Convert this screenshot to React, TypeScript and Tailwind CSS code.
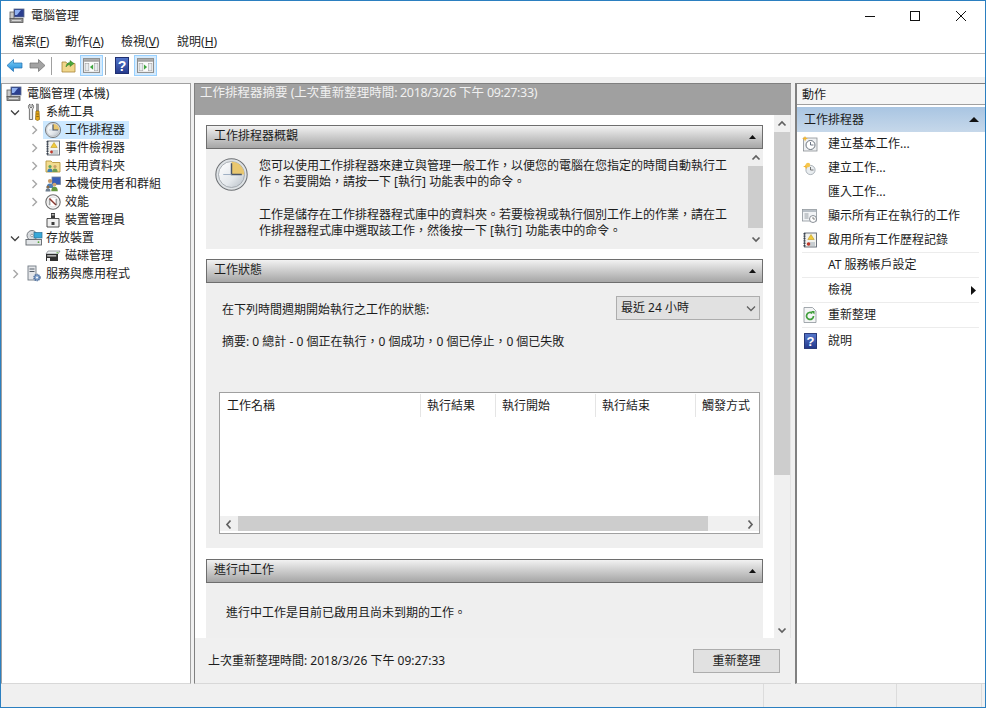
import React from "react";

const C = "\uFF0C";

const Clock = ({ s = 16 }: { s?: number }) => (
  <svg width={s} height={s} viewBox="0 0 32 32" className="shrink-0">
    <defs>
      <linearGradient id="cg" x1="0" y1="0" x2="1" y2="1">
        <stop offset="0" stopColor="#ffffff" />
        <stop offset="0.6" stopColor="#e4e8ec" />
        <stop offset="1" stopColor="#b4bcc4" />
      </linearGradient>
    </defs>
    <circle cx="16" cy="16" r="15.2" fill="#dfe3e6" stroke="#6d7074" strokeWidth={s < 20 ? 1.8 : 1} />
    <circle cx="16" cy="16" r="12.6" fill="url(#cg)" stroke="#9aa0a6" strokeWidth="0.8" />
    <path d="M16 16V3.6A12.4 12.4 0 0 1 28.4 16Z" fill="#e9c76f" />
    <path d="M16 5V16H26" fill="none" stroke="#4a5568" strokeWidth={s < 20 ? 2.4 : 1.4} />
    <path d="M16 16H8" stroke="#9fb0c4" strokeWidth="1" />
  </svg>
);

const Computer = () => (
  <svg width="16" height="16" viewBox="0 0 16 16" className="shrink-0">
    <rect x="5" y="1" width="10" height="8" fill="#2b3f8f" stroke="#5a6a8a" strokeWidth="0.8" />
    <path d="M6 2h6l-4 5H6Z" fill="#8fb0f0" />
    <rect x="1" y="4" width="4" height="7" fill="#c9c9c9" stroke="#5f5f5f" strokeWidth="0.8" />
    <rect x="1" y="10.5" width="13" height="4" fill="#9a9a9a" stroke="#555" strokeWidth="0.8" />
    <path d="M3 12.5h9" stroke="#e8e8e8" strokeWidth="0.8" />
  </svg>
);

const Tools = () => (
  <svg width="16" height="18" viewBox="0 0 16 18" className="shrink-0">
    <path d="M4 1v3l1 1 1-1V1c2 1 2 4 .6 5v10.5H3.4V6C2 5 2 2 4 1Z" fill="#e8e8e8" stroke="#555" strokeWidth="0.8" />
    <rect x="10.5" y="1" width="2" height="7" fill="#9a9a9a" stroke="#666" strokeWidth="0.5" />
    <path d="M10 8h3l.5 8.5-2 1-2-1Z" fill="#e6a817" stroke="#8a6510" strokeWidth="0.7" />
    <path d="M10.4 11h2.4M10.4 13.5h2.4" stroke="#6d4e0a" strokeWidth="0.7" />
  </svg>
);

const LogBook = ({ warn = false }: { warn?: boolean }) => (
  <svg width="16" height="16" viewBox="0 0 16 16" className="shrink-0">
    <rect x="2.5" y="1" width="12" height="14" fill="#f2f2ee" stroke="#5c6470" strokeWidth="0.9" />
    <path d="M2.5 1v14" stroke="#39424f" strokeWidth="2" strokeDasharray="1.4 1" />
    <path d="M6 11h7M6 13h7" stroke="#93a0ad" strokeWidth="0.9" />
    <path d="M9 2.5l3.2 5H5.8Z" fill="#f2cc3c" stroke="#b38d10" strokeWidth="0.5" />
    <circle cx="6.5" cy="12" r={warn ? 1.4 : 1.8} fill="#c0392b" />
  </svg>
);

const SharedFolder = () => (
  <svg width="16" height="16" viewBox="0 0 16 16" className="shrink-0">
    <path d="M1 3h5l1.5 1.5H15V14H1Z" fill="#f3dc90" stroke="#b8963c" strokeWidth="0.9" />
    <circle cx="5" cy="8.5" r="1.6" fill="#5ea35e" />
    <path d="M2.4 14c0-2.6 1-3.6 2.6-3.6s2.6 1 2.6 3.6Z" fill="#3d7fb5" />
    <circle cx="10" cy="8.5" r="1.6" fill="#c9a06a" />
    <path d="M7.4 14c0-2.6 1-3.6 2.6-3.6s2.6 1 2.6 3.6Z" fill="#6d9b52" />
  </svg>
);

const Users = () => (
  <svg width="16" height="16" viewBox="0 0 16 16" className="shrink-0">
    <rect x="7" y="1" width="8.5" height="7.5" fill="#3a60b8" stroke="#72819a" strokeWidth="0.8" />
    <circle cx="5" cy="5" r="2.1" fill="#c99a66" />
    <path d="M1.5 12c0-3.4 1.5-4.6 3.5-4.6S8.500 8.600 8.500 12Z" fill="#4d7fb8" />
    <circle cx="9.500" cy="8.600" r="1.900" fill="#d2a673" />
    <path d="M6.200 15.200c0-3 1.400-4.400 3.300-4.400s3.300 1.400 3.300 4.400Z" fill="#64983f" />
    <circle cx="3" cy="11" r="1.500" fill="#8c6a44" />
    <path d="M.5 15.500c0-2.400 1-3.300 2.500-3.300s2.500.9 2.500 3.300Z" fill="#6f7f90" />
  </svg>
);

const Perf = () => (
  <svg width="16" height="16" viewBox="0 0 16 16" className="shrink-0">
    <circle cx="8" cy="8" r="7.200" fill="#f7f7f7" stroke="#6f6f6f" strokeWidth="1.100" />
    <circle cx="8" cy="8" r="5" fill="#fff" stroke="#c8c8c8" strokeWidth="0.600" />
    <path d="M4.500 4.500L11 11" stroke="#c0392b" strokeWidth="1.500" />
    <path d="M4.800 11V5.200L11.200 11V5" fill="none" stroke="#444" strokeWidth="0.700" />
  </svg>
);

const DeviceMgr = () => (
  <svg width="16" height="16" viewBox="0 0 16 16" className="shrink-0">
    <rect x="6" y="1" width="4" height="5" fill="#3b3b3b" />
    <rect x="6.800" y="2" width="1" height="1.500" fill="#ddd" />
    <rect x="8.300" y="2" width="1" height="1.500" fill="#ddd" />
    <path d="M2 6.500h12V15H2Z" fill="#f0f0f0" stroke="#3c3c3c" strokeWidth="0.900" />
    <rect x="6.500" y="10" width="3" height="3" fill="#3c3c3c" />
  </svg>
);

const Storage = () => (
  <svg width="18" height="16" viewBox="0 0 18 16" className="shrink-0">
    <circle cx="7" cy="5.500" r="5" fill="#d9dcdf" stroke="#6c7278" strokeWidth="0.900" />
    <circle cx="7" cy="5.500" r="1.300" fill="#fff" stroke="#6c7278" strokeWidth="0.600" />
    <rect x="9" y="2.500" width="8" height="5.500" fill="#38a8d8" stroke="#2b6f96" strokeWidth="0.700" />
    <rect x="1" y="9.500" width="15.500" height="5.500" fill="#e2e5e8" stroke="#5f656b" strokeWidth="0.900" />
    <circle cx="13.500" cy="12.200" r="0.900" fill="#56a83e" />
  </svg>
);

const Disk = () => (
  <svg width="16" height="16" viewBox="0 0 16 16" className="shrink-0">
    <path d="M3 3h12l-2 3H1Z" fill="#eceff1" stroke="#7c8186" strokeWidth="0.700" />
    <rect x="1" y="6" width="12" height="7" fill="#2f2f2f" />
    <rect x="2.200" y="7.200" width="9" height="1.300" fill="#cfcfcf" />
    <rect x="11.500" y="4.200" width="1.800" height="1" fill="#6cbf4a" />
    <rect x="2" y="10" width="3" height="3" fill="#f4f4f4" />
  </svg>
);

const Services = () => (
  <svg width="16" height="18" viewBox="0 0 16 18" className="shrink-0">
    <rect x="2" y="1" width="8" height="14" fill="#e4e6e9" stroke="#717a84" strokeWidth="0.900" />
    <path d="M3.500 4h5M3.500 6.500h5" stroke="#555e68" strokeWidth="1" />
    <circle cx="11" cy="12.500" r="3" fill="#7f9fc9" stroke="#4c6d9c" strokeWidth="1.500" strokeDasharray="1.200 0.700" />
    <circle cx="11" cy="12.500" r="1" fill="#fff" />
  </svg>
);

const Help = ({ s = 14 }: { s?: number }) => (
  <svg width={s} height={s + 3} viewBox="0 0 14 17" className="shrink-0">
    <defs>
      <linearGradient id="hg" x1="0" y1="0" x2="0" y2="1">
        <stop offset="0" stopColor="#5578cc" />
        <stop offset="1" stopColor="#24398c" />
      </linearGradient>
    </defs>
    <rect x="0.500" y="0.500" width="13" height="16" fill="url(#hg)" stroke="#1f2f70" />
    <text x="7" y="13.500" textAnchor="middle" fontSize="14" fontWeight="700" fill="#fff" fontFamily="Liberation Sans">?</text>
  </svg>
);

const PaneToggle = ({ left }: { left: boolean }) => (
  <svg width="17" height="15" viewBox="0 0 16 14">
    <rect x="0.500" y="0.500" width="15" height="13" fill="#fbfbfb" stroke="#8d8d8d" />
    <rect x="1" y="1" width="14" height="2.500" fill="#a3a3a3" />
    <rect x="2" y="5" width="3.500" height="7" fill="#e8ecef" stroke="#9a9a9a" strokeWidth="0.500" />
    <rect x="11" y="5" width="3" height="7" fill="#e8ecef" stroke="#9a9a9a" strokeWidth="0.500" />
    {left ? <path d="M9.500 6v5L6.500 8.500Z" fill="#3fa63f" /> : <path d="M6.500 6v5l3-2.500Z" fill="#3fa63f" />}
  </svg>
);

const NavArrow = ({ left }: { left: boolean }) => (
  <svg width="17" height="15" viewBox="0 0 17 14">
    <defs>
      <linearGradient id="ba" x1="0" y1="0" x2="0" y2="1">
        <stop offset="0" stopColor="#7fd0f6" />
        <stop offset="1" stopColor="#1e88d8" />
      </linearGradient>
    </defs>
    {left ? (
      <path d="M1 7l6.500-6v3.500H16v5H7.500V13Z" fill="url(#ba)" stroke="#1f6fb0" strokeWidth="0.700" />
    ) : (
      <path d="M16 7L9.500 1v3.500H1v5h8.500V13Z" fill="#a3a3a3" stroke="#6e6e6e" strokeWidth="0.700" />
    )}
  </svg>
);

const FolderUp = () => (
  <svg width="15" height="15" viewBox="0 0 15 15">
    <path d="M1 4h4l1 1.500h8V14H1Z" fill="#f0d68a" stroke="#a8873a" strokeWidth="0.800" />
    <path d="M5 9c0-3 2-4.500 4-4.500V2.500L13 5.500 9 8.500V6.500C7.500 6.500 6 7.500 5 9Z" fill="#4aa83a" stroke="#2f7a25" strokeWidth="0.500" />
  </svg>
);

const NewBasic = () => (
  <svg width="16" height="16" viewBox="0 0 16 16">
    <rect x="1.500" y="2" width="13.500" height="13" fill="#eef0f2" stroke="#8a8f94" strokeWidth="0.800" />
    <circle cx="8.500" cy="9" r="4.500" fill="#fff" stroke="#5d6670" strokeWidth="0.900" />
    <path d="M8.500 6v3h3" fill="none" stroke="#4a5568" strokeWidth="0.800" />
    <path d="M3 0l.9 1.800L6 2.500l-2 .8L3 5.500l-.8-2.200L0 2.500l2.100-.7Z" fill="#f2b632" />
  </svg>
);

const NewTask = () => (
  <svg width="16" height="16" viewBox="0 0 16 16">
    <circle cx="8.500" cy="10" r="4.600" fill="#e9edf0" stroke="#99a2aa" strokeWidth="0.800" />
    <path d="M8.500 7v3h3" fill="none" stroke="#555" strokeWidth="0.800" />
    <path d="M4 4l.9 1.800L7 6.500l-2 .8L4 9.500 3.200 7.300 1 6.500l2.100-.7Z" fill="#f2b632" />
    <circle cx="6" cy="5" r="2.200" fill="#f6c64c" />
  </svg>
);

const ShowRunning = () => (
  <svg width="16" height="16" viewBox="0 0 16 16">
    <rect x="0.500" y="1.500" width="14" height="11.500" fill="#f2f4f6" stroke="#8d949b" strokeWidth="0.800" />
    <rect x="1" y="2" width="13" height="2" fill="#b9c0c7" />
    <path d="M2.500 6h4M2.500 8h4M2.500 10h4" stroke="#8d949b" strokeWidth="0.900" />
    <circle cx="11" cy="11" r="3.500" fill="#fff" stroke="#6d757d" strokeWidth="0.800" />
    <path d="M11 9v2h2" fill="none" stroke="#555" strokeWidth="0.700" />
  </svg>
);

const Refresh = () => (
  <svg width="14" height="16" viewBox="0 0 14 16">
    <path d="M1 .5h8.500L13 4v11.500H1Z" fill="#f4f5f6" stroke="#8d949b" strokeWidth="0.800" />
    <path d="M10.500 9a3.500 3.500 0 1 1-1.200-2.700" fill="none" stroke="#3f9e3a" strokeWidth="1.700" />
    <path d="M8 4h3.500v3.500Z" fill="#3f9e3a" />
  </svg>
);

const ChevronRight = ({ c = "#a6a6a6" }: { c?: string }) => (
  <svg width="7" height="10" viewBox="0 0 7 10" className="shrink-0">
    <path d="M1.500 1l4 4-4 4" fill="none" stroke={c} strokeWidth="1.400" />
  </svg>
);

const ChevronDown = ({ c = "#404040", w = 10 }: { c?: string; w?: number }) => (
  <svg width={w} height="7" viewBox="0 0 10 7" className="shrink-0">
    <path d="M1 1.500l4 4 4-4" fill="none" stroke={c} strokeWidth="1.300" />
  </svg>
);

const ScrollChevron = ({ dir }: { dir: "up" | "down" | "left" | "right" }) => {
  const d = {
    up: "M1.500 6L5 2.500 8.500 6",
    down: "M1.500 3L5 6.500 8.500 3",
    left: "M6.500 1L3 5l3.500 4",
    right: "M3.500 1L7 5 3.500 9",
  }[dir];
  return (
    <svg width="10" height="10" viewBox="0 0 10 9" className="shrink-0">
      <path d={d} fill="none" stroke="#606060" strokeWidth="1.700" />
    </svg>
  );
};

const SmallTri = () => (
  <svg width="7" height="4" viewBox="0 0 7 4" className="shrink-0">
    <path d="M0 4L3.500 0 7 4Z" fill="#111" />
  </svg>
);

type Tree = { label: string; icon: React.ReactNode; chev?: "r" | "d"; level: number; sel?: boolean };

const tree: Tree[] = [
  { label: "系統工具", icon: <Tools />, chev: "d", level: 1 },
  { label: "工作排程器", icon: <Clock />, chev: "r", level: 2, sel: true },
  { label: "事件檢視器", icon: <LogBook warn />, chev: "r", level: 2 },
  { label: "共用資料夾", icon: <SharedFolder />, chev: "r", level: 2 },
  { label: "本機使用者和群組", icon: <Users />, chev: "r", level: 2 },
  { label: "效能", icon: <Perf />, chev: "r", level: 2 },
  { label: "裝置管理員", icon: <DeviceMgr />, level: 2 },
  { label: "存放裝置", icon: <Storage />, chev: "d", level: 1 },
  { label: "磁碟管理", icon: <Disk />, level: 2 },
  { label: "服務與應用程式", icon: <Services />, chev: "r", level: 1 },
];

const TreeRow = ({ t }: { t: Tree }) => (
  <div className={`flex h-[18px] items-center ${t.level === 1 ? "pl-[8px]" : "pl-[27px]"}`}>
    <span className="flex w-[10px] justify-center">
      {t.chev === "r" && <ChevronRight />}
      {t.chev === "d" && <ChevronDown />}
    </span>
    <span className={`ml-[4px] flex h-[18px] items-center ${t.sel ? "bg-[#cce8ff] pr-[4px]" : ""}`}>
      <span className="flex w-[19px] justify-center">{t.icon}</span>
      <span className="ml-[3px] whitespace-nowrap">{t.label}</span>
    </span>
  </div>
);

const SectionHeader = ({ title }: { title: string }) => (
  <div className="flex h-[24px] items-center justify-between border border-[#6e6e6e] bg-gradient-to-b from-[#f2f2f2] to-[#a6a6a6] pl-[7px] pr-[6px]">
    <span className="pb-[2px]">{title}</span>
    <SmallTri />
  </div>
);

const Menu = ({ t, k, w }: { t: string; k: string; w: string }) => (
  <span className={`whitespace-nowrap ${w}`}>
    {t}(<span className="underline">{k}</span>)
  </span>
);

type Act = { label: string; icon?: React.ReactNode; sep?: boolean; arrow?: boolean; h: string };

const actions: Act[] = [
  { label: "建立基本工作...", icon: <NewBasic />, h: "h-[24px]" },
  { label: "建立工作...", icon: <NewTask />, h: "h-[24px]" },
  { label: "匯入工作...", h: "h-[24px]" },
  { label: "顯示所有正在執行的工作", icon: <ShowRunning />, h: "h-[24px]" },
  { label: "啟用所有工作歷程記錄", icon: <LogBook />, sep: true, h: "h-[25px]" },
  { label: "AT 服務帳戶設定", sep: true, h: "h-[25px]" },
  { label: "檢視", arrow: true, sep: true, h: "h-[25px]" },
  { label: "重新整理", icon: <Refresh />, sep: true, h: "h-[25px]" },
  { label: "說明", icon: <Help s={13} />, h: "h-[25px]" },
];

const Lat = ({ children }: { children: React.ReactNode }) => (
  <span className="tracking-[-0.36px]">{children}</span>
);

const columns = [
  ["工作名稱", "w-[201px] pl-[7px]"],
  ["執行結果", "w-[75px] pl-[6px]"],
  ["執行開始", "w-[100px] pl-[6px]"],
  ["執行結束", "w-[100px] pl-[6px]"],
  ["觸發方式", "flex-1 pl-[6px]"],
];

export default function App() {
  return (
    <div className="flex h-[708px] w-[986px] flex-col overflow-hidden border border-[#2b7fc0] bg-[#f0f0f0] text-[12px] leading-[16px] text-[#1c1c1c] [font-family:'Noto_Sans','Noto_Sans_CJK_TC',sans-serif]">
      {/* title bar */}
      <div className="flex h-[29px] items-center bg-white pl-[8px]">
        <Computer />
        <span className="ml-[6px] flex-1">電腦管理</span>
        <span className="flex w-[45px] justify-center">
          <svg width="10" height="10" viewBox="0 0 10 10"><path d="M0 5.500h10" stroke="#111" /></svg>
        </span>
        <span className="flex w-[46px] justify-center">
          <svg width="10" height="10" viewBox="0 0 10 10"><rect x="0.500" y="0.500" width="9" height="9" fill="none" stroke="#111" /></svg>
        </span>
        <span className="flex w-[46px] justify-center pr-[1px]">
          <svg width="10" height="10" viewBox="0 0 10 10"><path d="M0 0l10 10M10 0L0 10" stroke="#111" /></svg>
        </span>
        <span className="w-[1px]" />
      </div>
      {/* menu */}
      <div className="flex h-[24px] items-center border-b border-[#b4b4b4] bg-white pl-[11px]">
        <Menu t="檔案" k="F" w="w-[53px]" />
        <Menu t="動作" k="A" w="w-[56px]" />
        <Menu t="檢視" k="V" w="w-[56px]" />
        <Menu t="說明" k="H" w="w-[50px]" />
      </div>
      {/* toolbar */}
      <div className="flex h-[23px] items-center bg-white pl-[5px]">
        <NavArrow left />
        <span className="ml-[6px] flex"><NavArrow left={false} /></span>
        <span className="ml-[5px] h-[18px] w-px bg-[#a0a0a0]" />
        <span className="ml-[9px] flex"><FolderUp /></span>
        <span className="ml-[4px] flex h-[21px] w-[23px] shrink-0 items-center justify-center border border-[#99d1ff] bg-[#d5eafc]"><PaneToggle left /></span>
        <span className="ml-[2px] h-[18px] w-px bg-[#a0a0a0]" />
        <span className="ml-[9px] flex"><Help s={14} /></span>
        <span className="ml-[5px] flex h-[21px] w-[23px] shrink-0 items-center justify-center border border-[#99d1ff] bg-[#d5eafc]"><PaneToggle left={false} /></span>
      </div>
      {/* main */}
      <div className="flex h-[607px] pt-[6px]">
        {/* tree */}
        <div className="h-full w-[190px] shrink-0 border border-[#a0a0a0] border-b-[#d8d8d8] bg-white pt-[1px]">
          <div className="flex h-[18px] items-center pl-[4px]">
            <Computer />
            <span className="ml-[5px]">電腦管理 (本機)</span>
          </div>
          {tree.map((t) => (
            <TreeRow key={t.label} t={t} />
          ))}
        </div>
        <div className="w-[3px] shrink-0" />
        {/* center */}
        <div className="flex h-full w-[597px] shrink-0 flex-col border-y border-l border-[#808080] border-b-[#d8d8d8]">
          <div className="h-[31px] whitespace-nowrap bg-[#a0a0a0] pl-[5px] pt-[1px] text-[12.500px] text-[#f0f0f0]">
            工作排程器摘要 <Lat>(</Lat>上次重新整理時間<Lat>: 2018/3/26 </Lat>下午<Lat> 09:27:33)</Lat>
          </div>
          <div className="flex h-[523px]">
            <div className="w-[579px] shrink-0 overflow-hidden bg-white px-[11px] pt-[10px]">
              <SectionHeader title="工作排程器概觀" />
              <div className="flex h-[100px] bg-[#efefef]">
                <div className="w-[53px] shrink-0 pl-[9px] pt-[9px]">
                  <Clock s={33} />
                </div>
                <div className="flex-1 whitespace-nowrap pt-[9px] leading-[16.300px]">
                  <p>{`您可以使用工作排程器來建立與管理一般工作${C}以便您的電腦在您指定的時間自動執行工`}</p>
                  <p>{`作。若要開始${C}請按一下 [執行] 功能表中的命令。`}</p>
                  <p className="mt-[16px]">{`工作是儲存在工作排程器程式庫中的資料夾。若要檢視或執行個別工作上的作業${C}請在工`}</p>
                  <p>{`作排程器程式庫中選取該工作${C}然後按一下 [執行] 功能表中的命令。`}</p>
                </div>
                <div className="flex w-[15px] shrink-0 flex-col items-center">
                  <div className="flex h-[17px] items-center"><ScrollChevron dir="up" /></div>
                  <div className="h-[62px] w-full bg-[#cdcdcd]" />
                  <div className="flex flex-1 items-center"><ScrollChevron dir="down" /></div>
                </div>
              </div>
              <div className="mt-[10px]"><SectionHeader title="工作狀態" /></div>
              <div className="h-[265px] bg-[#efefef] pl-[13px] pr-[3px]">
                <div className="flex h-[37px] items-end justify-between pl-[3px]">
                  <span className="pb-[2px]">在下列時間週期開始執行之工作的狀態:</span>
                  <div className="flex h-[24px] w-[144px] items-center justify-between border border-[#adadad] bg-[#e1e1e1] pl-[4px] pr-[3px]">
                    <span>最近 24 小時</span>
                    <ChevronDown c="#606060" />
                  </div>
                </div>
                <div className="mt-[13px] pl-[3px] leading-[18px]">{`摘要: 0 總計 - 0 個正在執行${C}0 個成功${C}0 個已停止${C}0 個已失敗`}</div>
                <div className="mt-[41px] flex h-[142px] flex-col border border-[#a0a0a0] bg-white">
                  <div className="flex h-[25px] items-center">
                    {columns.map(([t, w]) => (
                      <div key={t} className={`flex h-[23px] items-center border-r border-[#e5e5e5] last:border-r-0 ${w}`}>
                        {t}
                      </div>
                    ))}
                  </div>
                  <div className="flex-1" />
                  <div className="flex h-[15px] items-center bg-[#f0f0f0]">
                    <div className="flex w-[18px] justify-center"><ScrollChevron dir="left" /></div>
                    <div className="h-full w-[470px] bg-[#cdcdcd]" />
                    <div className="flex flex-1 justify-end pr-[4px]"><ScrollChevron dir="right" /></div>
                  </div>
                  <div className="h-[2px]" />
                </div>
              </div>
              <div className="mt-[11px]"><SectionHeader title="進行中工作" /></div>
              <div className="h-[56px] bg-[#efefef] pl-[20px] pt-[22px]">進行中工作是目前已啟用且尚未到期的工作。</div>
            </div>
            <div className="flex w-[16px] shrink-0 flex-col items-center bg-[#f0f0f0]">
              <div className="flex h-[17px] items-center"><ScrollChevron dir="up" /></div>
              <div className="h-[343px] w-full bg-[#cdcdcd]" />
              <div className="flex flex-1 items-end pb-[3px]"><ScrollChevron dir="down" /></div>
            </div>
            <div className="w-px bg-[#e3e3e3]" />
          </div>
          <div className="flex flex-1 items-center justify-between bg-[#f0f0f0] pl-[13px] pr-[11px]">
            <span>上次重新整理時間: 2018/3/26 下午 09:27:33</span>
            <div className="flex h-[24px] w-[87px] items-center justify-center border border-[#adadad] bg-[#e1e1e1]">重新整理</div>
          </div>
        </div>
        <div className="w-[4px] shrink-0" />
        {/* actions */}
        <div className="h-full flex-1 border-y border-l-2 border-[#808080] border-b-[#d8d8d8] bg-white">
          <div className="flex h-[21px] items-center border-b border-[#a0a0a0] bg-[#f5f5f5] pl-[5px] pt-[2px]">動作</div>
          <div className="mt-[2px] flex h-[25px] items-center justify-between bg-gradient-to-b from-[#a9c5e2] to-[#c6d8ea] pl-[7px] pr-[6px]">
            <span>工作排程器</span>
            <svg width="10" height="5" viewBox="0 0 10 5"><path d="M0 5L5 0l5 5Z" fill="#111" /></svg>
          </div>
          <div className="pl-[5px] pr-[6px]">
            {actions.map((a) => (
              <div key={a.label} className={`flex items-center ${a.h} ${a.sep ? "border-b border-[#ececec]" : ""}`}>
                <span className="flex w-[16px] justify-center">{a.icon}</span>
                <span className="ml-[10px] flex-1 whitespace-nowrap">{a.label}</span>
                {a.arrow && (
                  <svg className="mr-[3px]" width="5" height="9" viewBox="0 0 5 9"><path d="M0 0l5 4.500L0 9Z" fill="#111" /></svg>
                )}
              </div>
            ))}
          </div>
        </div>
      </div>
      {/* status bar */}
      <div className="flex flex-1 items-stretch bg-[#f0f0f0]">
        <div className="w-[763px] border-r border-[#dcdcdc]" />
        <div className="w-[133px] border-r border-[#dcdcdc]" />
        <div className="w-[85px] border-r border-[#dcdcdc]" />
      </div>
    </div>
  );
}
